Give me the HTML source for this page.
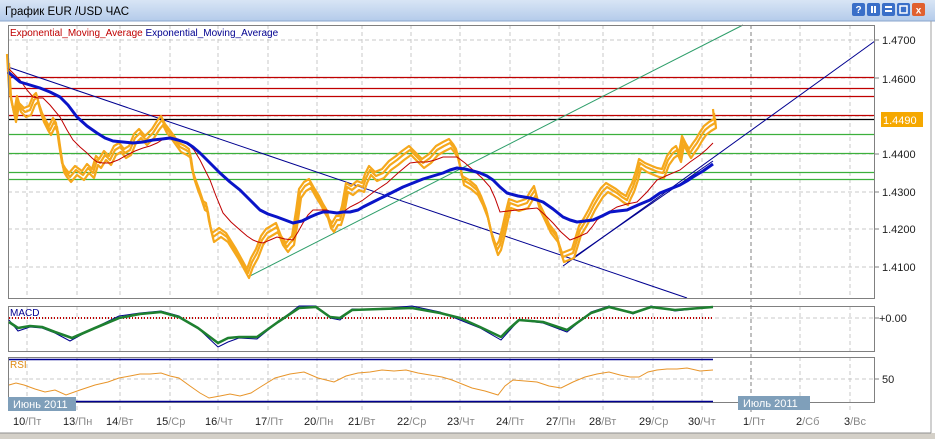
<!DOCTYPE html>
<html><head><meta charset="utf-8"><style>
body{margin:0;width:935px;height:439px;overflow:hidden;background:#fff;font-family:"Liberation Sans","DejaVu Sans",sans-serif}
svg{position:absolute;left:0;top:0}
</style></head><body>
<svg width="935" height="439" viewBox="0 0 935 439" xmlns="http://www.w3.org/2000/svg" xmlns:xlink="http://www.w3.org/1999/xlink" font-family="Liberation Sans, DejaVu Sans, sans-serif">
<defs><linearGradient id="tb" x1="0" y1="0" x2="0" y2="1"><stop offset="0" stop-color="#d8e5f5"/><stop offset="1" stop-color="#b4cbea"/></linearGradient></defs>
<rect x="0" y="0" width="935" height="439" fill="#fff"/>
<rect x="0" y="0" width="935" height="21" fill="url(#tb)"/>
<line x1="0" y1="21" x2="935" y2="21" stroke="#8aa6cc"/>
<text x="5" y="15" font-size="11.5" fill="#000">График EUR /USD  ЧАС</text>
<g font-size="10" font-weight="bold" fill="#fff" text-anchor="middle">
<rect x="852" y="3" width="13" height="13" rx="2" fill="#3a6fc8"/><text x="858.5" y="13">?</text>
<rect x="867" y="3" width="13" height="13" rx="2" fill="#3a6fc8"/><rect x="871" y="6" width="2" height="7" fill="#fff"/><rect x="874" y="6" width="2" height="7" fill="#fff"/>
<rect x="882" y="3" width="13" height="13" rx="2" fill="#3a6fc8"/><rect x="885" y="6" width="7" height="2" fill="#fff"/><rect x="885" y="10" width="7" height="2" fill="#fff"/>
<rect x="897" y="3" width="13" height="13" rx="2" fill="#3a6fc8"/><rect x="900" y="6" width="7" height="7" fill="none" stroke="#fff" stroke-width="1.5"/>
<rect x="912" y="3" width="13" height="13" rx="2" fill="#e0602f"/><text x="918.5" y="13.5">x</text>
</g>
<line x1="931" y1="21" x2="931" y2="434" stroke="#a0a0a0"/>
<rect x="0" y="433" width="935" height="6" fill="#d4d0c8"/>
<line x1="0" y1="433" x2="931" y2="433" stroke="#909090"/>
<g stroke="#c8c8c8" stroke-dasharray="4,3" stroke-width="1">
<path d="M27 25V299M77 25V299M120 25V299M170 25V299M218 25V299M268 25V299M317 25V299M362 25V299M411 25V299M460 25V299M510 25V299M559 25V299M603 25V299M653 25V299M702 25V299M800 25V299M850 25V299"/>
<path d="M27 306V351M77 306V351M120 306V351M170 306V351M218 306V351M268 306V351M317 306V351M362 306V351M411 306V351M460 306V351M510 306V351M559 306V351M603 306V351M653 306V351M702 306V351M800 306V351M850 306V351"/>
<path d="M27 357V412M77 357V412M120 357V412M170 357V412M218 357V412M268 357V412M317 357V412M362 357V412M411 357V412M460 357V412M510 357V412M559 357V412M603 357V412M653 357V412M702 357V412M800 357V412M850 357V412"/>
<path d="M8 40H875M8 78H875M8 116H875M8 154H875M8 192H875M8 229H875M8 267H875M8 318H875M8 379H875"/>
</g>
<path d="M751 25V412" stroke="#808080" stroke-dasharray="4,3"/>
<g stroke-width="1.2">
<path d="M8 77.5H875M8 88.5H875M8 96.5H875M8 115.5H875" stroke="#c00000"/>
<path d="M8 119.5H875" stroke="#000"/>
<path d="M8 134.5H875M8 153.5H875M8 172.5H875M8 179.5H875" stroke="#3cb03c"/>
</g>
<path d="M8 67L687 298" stroke="#000090" stroke-width="1"/>
<path d="M248 277L743 25" stroke="#2e9e6a" stroke-width="1"/>
<path d="M563 266L875 41" stroke="#000090" stroke-width="1"/>
<path d="M567 262L713 161" stroke="#000090" stroke-width="1"/>
<polyline id="pr" fill="none" stroke="#f5a81c" stroke-width="2.2" stroke-linejoin="round" points="8,58 10,92 12,103 15,117 18,100 20,107 25,112 30,110 34,100 37,97 40,108 43,117 47,125 50,130 54,122 57,127 60,148 63,167 66,172 70,177 76,170 83,175 88,168 93,173 97,160 100,163 105,155 110,160 115,150 120,147 125,153 130,150 135,138 140,133 146,140 153,133 158,125 162,120 166,128 170,133 175,140 180,147 186,150 190,153 193,173 197,185 200,193 204,205 207,207 210,225 213,237 220,232 227,237 232,245 237,253 242,262 248,273 252,262 257,253 262,240 267,233 272,230 277,227 282,240 287,247 290,243 293,240 297,215 300,193 305,186 310,183 315,192 320,200 324,208 327,213 330,223 333,227 337,220 340,220 343,210 347,187 352,190 358,185 363,187 366,178 370,170 376,176 383,173 390,165 397,160 403,155 410,150 417,157 423,163 430,158 437,150 444,146 450,143 454,148 457,153 460,165 463,180 470,184 477,190 482,200 487,213 492,235 497,250 500,245 503,233 507,215 510,203 518,206 527,203 531,196 535,190 539,205 543,213 550,228 557,237 560,248 563,257 568,255 573,253 577,240 580,230 585,222 590,213 594,205 597,200 602,192 607,187 612,190 617,193 622,197 627,200 630,193 633,187 637,175 640,163 646,167 653,170 658,172 663,173 668,160 673,153 677,150 680,157 683,140 687,148 690,153 694,147 697,143 701,136 705,130 710,126 715,123 714,113"/>
<use xlink:href="#pr" href="#pr" transform="translate(1,5)"/>
<use xlink:href="#pr" href="#pr" transform="translate(-1,-4)"/>
<polyline fill="none" stroke="#c00000" stroke-width="1" points="8,68 14,74 20,80 27,90 33,97 38,98 43,98 50,105 60,117 67,130 73,140 80,147 87,153 92,158 97,162 103,163 110,163 118,160 127,155 135,151 143,148 150,146 157,143 162,140 167,138 177,140 187,143 194,150 200,160 205,170 210,180 216,196 223,213 231,222 240,230 247,236 253,240 258,242 263,243 270,240 277,237 285,239 293,240 298,232 303,223 308,215 313,210 320,210 327,210 332,212 337,213 343,212 350,207 358,203 363,200 375,191 387,183 398,173 410,163 418,162 427,162 435,160 443,157 450,157 457,157 465,163 473,170 482,178 490,187 495,198 500,212 508,211 517,210 527,209 537,208 545,215 553,223 561,232 570,240 578,237 587,233 592,227 597,220 607,213 617,207 627,204 637,202 647,192 657,180 668,175 680,170 690,162 700,155 707,149 713,143"/>
<polyline fill="none" stroke="#0a14c8" stroke-width="3" stroke-linejoin="round" points="8,72 14,77 20,82 30,85 40,88 50,92 60,97 68,105 77,117 87,126 97,133 105,138 113,141 123,142 133,143 143,142 153,140 162,139 170,138 178,140 187,143 193,147 200,153 210,163 220,173 230,182 240,190 250,200 260,210 268,214 277,217 285,220 293,223 302,221 310,217 317,214 323,212 330,212 337,213 343,212 350,212 358,210 363,207 373,202 383,197 393,192 403,187 413,183 423,179 433,176 443,173 450,170 457,168 465,169 473,171 480,173 487,176 493,180 500,187 507,193 518,196 530,198 537,200 543,202 553,209 563,217 570,220 577,222 585,221 593,220 602,216 610,212 618,211 627,210 638,205 650,200 660,193 670,189 680,185 687,181 693,177 703,171 713,164"/>
<rect x="8.5" y="25.5" width="866" height="273" fill="none" stroke="#808080"/>
<text x="10" y="36" font-size="10" fill="#c00000">Exponential_Moving_Average <tspan fill="#000090">Exponential_Moving_Average</tspan></text>
<g font-size="11" fill="#202020">
<path d="M875 40h4M875 78h4M875 154h4M875 192h4M875 229h4M875 267h4M875 318h4M875 379h4" stroke="#808080"/>
<text x="882" y="44">1.4700</text><text x="882" y="83">1.4600</text><text x="882" y="158">1.4400</text><text x="882" y="196">1.4300</text><text x="882" y="233">1.4200</text><text x="882" y="271">1.4100</text>
<text x="879" y="322">+0.00</text><text x="882" y="383">50</text>
</g>
<rect x="881" y="112" width="42" height="15" fill="#f5a800"/>
<text x="883" y="124" font-size="11" fill="#fff">1.4490</text>
<rect x="8.5" y="306.5" width="866" height="45" fill="none" stroke="#808080"/>
<path d="M9 318H713" stroke="#c00000" stroke-width="2" stroke-dasharray="1,2"/>
<text x="10" y="316" font-size="10" fill="#000090">MACD</text>
<polyline fill="none" stroke="#000090" stroke-width="1" points="9,320 18,331 30,327 42,328 55,333 70,341 90,330 119,316 140,313 161,311 179,316 200,330 218,347 228,342 239,338 257,339 278,322 299,306 316,306 330,318 340,320 352,309 380,309 412,306 440,312 460,320 480,328 501,340 510,330 519,320 543,323 567,332 591,312 609,306 633,314 651,306 675,311 713,307"/>
<polyline fill="none" stroke="#1e8030" stroke-width="2.6" stroke-linejoin="round" points="9,322 18,328 30,326 42,327 55,332 72,338 95,328 119,318 140,314 161,312 179,317 198,328 218,343 228,338 239,337 257,337 278,322 299,308 316,307 330,317 340,318 352,310 380,309 412,308 440,313 460,318 480,327 501,337 510,328 519,320 543,322 567,330 591,313 609,307 633,313 651,307 675,310 713,307"/>
<rect x="8.5" y="357.5" width="866" height="45" fill="none" stroke="#808080"/>
<path d="M9 359.5H713M9 401.5H713" stroke="#000090" stroke-width="1.5"/>
<text x="10" y="368" font-size="10" fill="#e08a10">RSI</text>
<polyline fill="none" stroke="#e8952a" stroke-width="1" points="9,385 16,383 24,385 35,389 45,392 55,390 66,395 80,390 95,385 108,382 119,378 130,376 140,374 150,374 161,373 170,376 179,378 190,386 200,393 209,398 220,396 230,394 240,396 251,393 262,386 275,378 290,374 304,372 318,378 334,382 346,376 358,373 370,372 382,370 394,371 406,370 418,373 430,375 442,377 452,380 462,384 472,388 485,391 498,395 505,386 513,380 525,381 537,382 549,386 561,388 573,382 585,377 597,374 609,372 620,375 630,377 639,377 648,372 657,370 667,369 677,369 687,368 700,371 713,370"/>
<rect x="8" y="397" width="68" height="14" fill="#7f9fba"/>
<text x="13" y="408" font-size="11" fill="#fff">Июнь 2011</text>
<rect x="738" y="396" width="72" height="14" fill="#7f9fba"/>
<text x="743" y="407" font-size="11" fill="#fff">Июль 2011</text>
<g font-size="11" fill="#202020">
<text x="13" y="425">10<tspan fill="#888">/Пт</tspan></text>
<text x="63" y="425">13<tspan fill="#888">/Пн</tspan></text>
<text x="106" y="425">14<tspan fill="#888">/Вт</tspan></text>
<text x="156" y="425">15<tspan fill="#888">/Ср</tspan></text>
<text x="205" y="425">16<tspan fill="#888">/Чт</tspan></text>
<text x="255" y="425">17<tspan fill="#888">/Пт</tspan></text>
<text x="304" y="425">20<tspan fill="#888">/Пн</tspan></text>
<text x="348" y="425">21<tspan fill="#888">/Вт</tspan></text>
<text x="397" y="425">22<tspan fill="#888">/Ср</tspan></text>
<text x="447" y="425">23<tspan fill="#888">/Чт</tspan></text>
<text x="496" y="425">24<tspan fill="#888">/Пт</tspan></text>
<text x="546" y="425">27<tspan fill="#888">/Пн</tspan></text>
<text x="589" y="425">28<tspan fill="#888">/Вт</tspan></text>
<text x="639" y="425">29<tspan fill="#888">/Ср</tspan></text>
<text x="688" y="425">30<tspan fill="#888">/Чт</tspan></text>
<text x="743" y="425">1<tspan fill="#888">/Пт</tspan></text>
<text x="796" y="425">2<tspan fill="#888">/Сб</tspan></text>
<text x="844" y="425">3<tspan fill="#888">/Вс</tspan></text>
</g>
</svg>
</body></html>
